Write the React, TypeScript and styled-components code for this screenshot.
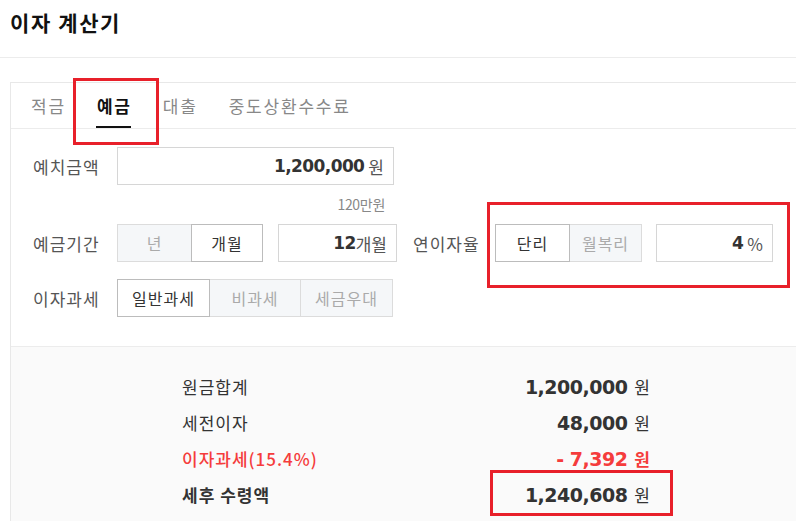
import { styled, createGlobalStyle } from 'styled-components';

const GlobalStyle = createGlobalStyle`
  html, body {
    margin: 0;
    padding: 0;
    background: #fff;
    overflow: hidden;
  }
  body {
    font-family: 'Noto Sans CJK KR', 'Noto Sans', sans-serif;
    color: #333;
  }
`;

const red = '#e8202a';

const Header = styled.header`
  height: 58px;
  box-sizing: border-box;
  padding: 7px 10px 0;
  border-bottom: 1px solid #ececec;
`;

const Title = styled.h1`
  margin: 0;
  font-size: 21px;
  line-height: 30px;
  font-weight: 700;
  letter-spacing: 1.6px;
  color: #111;
`;

const Card = styled.section`
  margin: 24px 0 0 10px;
  border: 1px solid #e8e8e8;
  border-right: none;
  border-bottom: none;
  height: 460px;
  display: flex;
  flex-direction: column;
`;

const Tabs = styled.nav`
  display: flex;
  gap: 31px;
  height: 46px;
  padding-left: 20px;
  border-bottom: 1px solid #ececec;
  box-sizing: border-box;
`;

const Tab = styled.div<{ $active?: boolean }>`
  position: relative;
  display: flex;
  align-items: center;
  font-size: 17px;
  letter-spacing: 1.8px;
  color: ${(p) => (p.$active ? '#111' : '#888')};
  font-weight: ${(p) => (p.$active ? 700 : 400)};
  ${(p) =>
    p.$active &&
    `
    &::after {
      content: '';
      position: absolute;
      left: -1px;
      right: 1px;
      bottom: 0;
      height: 2px;
      background: #111;
    }
  `}
`;

type Box = { $top: number; $left?: number; $right?: number; $w: number; $h: number };

const Highlight = styled.div<Box>`
  position: absolute;
  top: ${(p) => p.$top}px;
  ${(p) => (p.$right !== undefined ? `right: ${p.$right}px;` : `left: ${p.$left ?? 0}px;`)}
  width: ${(p) => p.$w}px;
  height: ${(p) => p.$h}px;
  border: 3px solid ${red};
  box-sizing: border-box;
  pointer-events: none;
`;

const Form = styled.div`
  padding: 18px 0 29px 22px;
  display: flex;
  flex-direction: column;
`;

const Row = styled.div<{ $mt?: number }>`
  display: flex;
  align-items: center;
  height: 38px;
  margin-top: ${(p) => p.$mt ?? 0}px;
`;

const Label = styled.div<{ $w?: number }>`
  width: ${(p) => p.$w ?? 84}px;
  font-size: 17px;
  letter-spacing: 1px;
  color: #555;
  flex-shrink: 0;
`;

const Input = styled.div<{ $w: number }>`
  width: ${(p) => p.$w}px;
  height: 38px;
  box-sizing: border-box;
  border: 1px solid #d6d6d6;
  display: flex;
  align-items: center;
  justify-content: flex-end;
  padding-right: 9px;
  background: #fff;
`;

const Num = styled.span`
  font-family: 'DejaVu Sans', sans-serif;
  font-weight: 700;
  font-size: 17px;
  color: #333;
  letter-spacing: -0.6px;
`;

const Unit = styled.span<{ $tight?: boolean }>`
  font-size: 17px;
  color: #555;
  margin-left: ${(p) => (p.$tight ? 0 : 4)}px;
`;

const Hint = styled.div`
  width: 277px;
  margin-left: 84px;
  text-align: right;
  font-size: 14px;
  letter-spacing: -0.3px;
  color: #888;
  height: 39px;
  line-height: 39px;
  padding-right: 9px;
  box-sizing: border-box;
`;

const Segments = styled.div`
  display: flex;
`;

const Segment = styled.div<{ $w: number; $on?: boolean }>`
  position: relative;
  width: ${(p) => p.$w}px;
  height: 38px;
  box-sizing: border-box;
  display: flex;
  align-items: center;
  justify-content: center;
  font-size: 16px;
  letter-spacing: 1px;
  background: ${(p) => (p.$on ? '#fff' : '#f5f7f9')};
  color: ${(p) => (p.$on ? '#333' : '#aaa')};
  border: 1px solid ${(p) => (p.$on ? '#bcbcbc' : '#dcdcdc')};
  z-index: ${(p) => (p.$on ? 1 : 0)};
  & + & {
    margin-left: -1px;
  }
`;

const Group = styled.div<{ $gap: number }>`
  position: relative;
  display: flex;
  align-items: center;
  gap: ${(p) => p.$gap}px;
`;

const Results = styled.div`
  flex: 1;
  background: #fafafa;
  border-top: 1px solid #ececec;
  padding: 21px 0 0 171px;
`;

const ResultRow = styled.div<{ $red?: boolean }>`
  width: 468px;
  height: 36px;
  display: flex;
  align-items: center;
  justify-content: space-between;
  color: ${(p) => (p.$red ? '#f53c3c' : '#333')};
`;

const ResultLabel = styled.div<{ $weight: number }>`
  font-size: 17px;
  letter-spacing: 1px;
  font-weight: ${(p) => p.$weight};
  color: inherit;
`;

const ResultValue = styled.div`
  position: relative;
  display: flex;
  align-items: baseline;
`;

const Big = styled.span`
  font-family: 'DejaVu Sans', sans-serif;
  font-weight: 700;
  font-size: 19px;
  letter-spacing: -0.5px;
`;

const Won = styled.span<{ $bold?: boolean }>`
  font-size: 17px;
  margin-left: 7px;
  font-weight: ${(p) => (p.$bold ? 700 : 400)};
`;

const results = [
  { label: '원금합계', value: '1,200,000' },
  { label: '세전이자', value: '48,000' },
  { label: '이자과세(15.4%)', value: '- 7,392', tone: 'red' },
  { label: '세후 수령액', value: '1,240,608', tone: 'strong' },
];

const App = () => {
  return (
    <>
      <GlobalStyle />
      <Header>
        <Title>이자 계산기</Title>
      </Header>
      <Card>
        <Tabs>
          <Tab>적금</Tab>
          <Tab $active>
            예금
            <Highlight $top={-5} $left={-24} $w={86} $h={67} />
          </Tab>
          <Tab>대출</Tab>
          <Tab>중도상환수수료</Tab>
        </Tabs>
        <Form>
          <Row>
            <Label>예치금액</Label>
            <Input $w={277}>
              <Num>1,200,000</Num>
              <Unit>원</Unit>
            </Input>
          </Row>
          <Hint>120만원</Hint>
          <Row>
            <Label>예금기간</Label>
            <Segments>
              <Segment $w={75}>년</Segment>
              <Segment $w={72} $on>
                개월
              </Segment>
            </Segments>
            <Input $w={119} style={{ marginLeft: 15 }}>
              <Num>12</Num>
              <Unit $tight>개월</Unit>
            </Input>
            <Label $w={82} style={{ marginLeft: 16 }}>
              연이자율
            </Label>
            <Group $gap={14}>
              <Segments>
                <Segment $w={75} $on>
                  단리
                </Segment>
                <Segment $w={73}>월복리</Segment>
              </Segments>
              <Input $w={117}>
                <Num>4</Num>
                <Unit>%</Unit>
              </Input>
              <Highlight $top={-22} $left={-8} $w={303} $h={86} />
            </Group>
          </Row>
          <Row $mt={17}>
            <Label>이자과세</Label>
            <Segments>
              <Segment $w={93} $on>
                일반과세
              </Segment>
              <Segment $w={92}>비과세</Segment>
              <Segment $w={93}>세금우대</Segment>
            </Segments>
          </Row>
        </Form>
        <Results>
          {results.map((r) => (
            <ResultRow key={r.label} $red={r.tone === 'red'}>
              <ResultLabel $weight={r.tone === 'strong' ? 700 : r.tone === 'red' ? 500 : 400}>
                {r.label}
              </ResultLabel>
              <ResultValue>
                <Big>{r.value}</Big>
                <Won $bold={r.tone === 'red'}>원</Won>
                {r.tone === 'strong' && (
                  <Highlight $top={-12} $right={-23} $w={183} $h={46} />
                )}
              </ResultValue>
            </ResultRow>
          ))}
        </Results>
      </Card>
    </>
  );
};

export default App;
